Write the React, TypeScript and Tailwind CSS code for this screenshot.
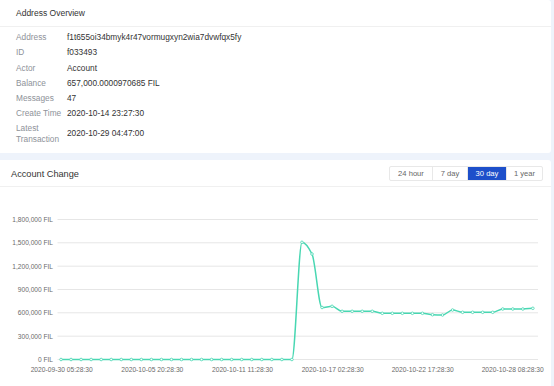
import React from "react";

const font = { fontFamily: '"Liberation Sans", Arial, sans-serif' };

const rows: [string, string][] = [
  ["Address", "f1t655oi34bmyk4r47vormugxyn2wia7dvwfqx5fy"],
  ["ID", "f033493"],
  ["Actor", "Account"],
  ["Balance", "657,000.0000970685 FIL"],
  ["Messages", "47"],
  ["Create Time", "2020-10-14 23:27:30"],
];

// y values (svg coords) of each data point, read off the reference
const zeroY = 172.5;
const ys: number[] = [
  ...Array(24).fill(zeroY),
  55.3, 67, 120.5, 119.3, 124.3, 124.3, 124.3, 124.3,
  126.3, 126.3, 126.3, 126.3, 126.3, 127.7, 128, 123,
  125.3, 125.3, 125.3, 125.3, 122, 122, 122, 121.3,
];

const pts = ys.map((y, i) => [61 + i * 10.04, y] as [number, number]);

// monotone cubic, no overshoot around the spike
function smoothPath(p: [number, number][]) {
  const n = p.length;
  const sl: number[] = [];
  for (let i = 0; i < n - 1; i++) sl.push((p[i + 1][1] - p[i][1]) / (p[i + 1][0] - p[i][0]));
  const m: number[] = [];
  for (let i = 0; i < n; i++) {
    if (i === 0) m.push(sl[0]);
    else if (i === n - 1) m.push(sl[n - 2]);
    else if (sl[i - 1] * sl[i] <= 0) m.push(0);
    else m.push((2 * sl[i - 1] * sl[i]) / (sl[i - 1] + sl[i]));
  }
  let d = `M${p[0][0]},${p[0][1]}`;
  for (let i = 0; i < n - 1; i++) {
    const h = (p[i + 1][0] - p[i][0]) / 3;
    d += ` C${(p[i][0] + h).toFixed(1)},${(p[i][1] + m[i] * h).toFixed(1)} ${(p[i + 1][0] - h).toFixed(1)},${(
      p[i + 1][1] - m[i + 1] * h
    ).toFixed(1)} ${p[i + 1][0].toFixed(1)},${p[i + 1][1].toFixed(1)}`;
  }
  return d;
}

const yTicks = [
  ["1,800,000 FIL", 32.5],
  ["1,500,000 FIL", 55.8],
  ["1,200,000 FIL", 79.2],
  ["900,000 FIL", 102.5],
  ["600,000 FIL", 125.8],
  ["300,000 FIL", 149.2],
  ["0 FIL", 172.5],
] as const;

const xTicks = [
  ["2020-09-30 05:28:30", 61.7],
  ["2020-10-05 20:28:30", 152.3],
  ["2020-10-11 11:28:30", 242.5],
  ["2020-10-17 02:28:30", 332.7],
  ["2020-10-22 17:28:30", 422.7],
  ["2020-10-28 08:28:30", 512.7],
] as const;

function Chart() {
  return (
    <svg width="551" height="198" className="block" style={font}>
      {yTicks.map(([label, y]) => (
        <g key={label}>
          <line x1="57.5" x2="538" y1={y} y2={y} stroke="#e6e6e6" strokeWidth="1" />
          <text x="53" y={y} dy="2.3" textAnchor="end" fontSize="6.6" fill="#6b6b6b">
            {label}
          </text>
        </g>
      ))}
      {xTicks.map(([label, x]) => (
        <text key={label} x={x} y="184.5" textAnchor="middle" fontSize="6.7" fill="#6b6b6b">
          {label}
        </text>
      ))}
      <path d={smoothPath(pts)} fill="none" stroke="#48d7b2" strokeWidth="1.5" />
      {pts.map(([x, y], i) => (
        <circle key={i} cx={x} cy={y} r="1.3" fill="#fff" stroke="#48d7b2" strokeWidth="0.8" />
      ))}
    </svg>
  );
}

export default function App() {
  const ranges = ["24 hour", "7 day", "30 day", "1 year"];
  const widths = ["w-[42px]", "w-[35px]", "w-[39px]", "w-[36px]"];
  return (
    <div className="w-[554px] h-[386px] overflow-hidden bg-[#eef3fb] pr-[3px]" style={font}>
      {/* Address overview */}
      <section className="bg-white rounded-r-[3px]">
        <div className="h-[27px] border-b border-[#f0f0f0] pl-[16px] pt-[1px] flex items-center text-[8.5px] text-[#333]">
          Address Overview
        </div>
        <div className="pt-[3px] pb-[6px] pl-[16px] text-[8.3px]">
          {rows.map(([k, v]) => (
            <div key={k} className="h-[15.1px] flex items-center">
              <span className="w-[51px] text-[#8e9299]">{k}</span>
              <span className="text-[#333]">{v}</span>
            </div>
          ))}
          <div className="h-[26.3px] flex items-center">
            <span className="w-[51px] text-[#8e9299] leading-[10.6px]">
              Latest
              <br />
              Transaction
            </span>
            <span className="text-[#333]">2020-10-29 04:47:00</span>
          </div>
        </div>
      </section>

      {/* Account change */}
      <section className="mt-[7px] bg-white rounded-r-[3px] h-[300px]">
        <div className="h-[27px] border-b border-[#f0f0f0] pl-[11px] pr-[8px] flex items-center justify-between">
          <span className="text-[9.2px] text-[#333] mt-[4px]">Account Change</span>
          <div className="flex h-[15px] border border-[#e8e8e8] rounded-[2px] mt-[1px] text-[7.6px]">
            {ranges.map((r, i) => (
              <div
                key={r}
                className={`${widths[i]} flex items-center justify-center ${
                  i > 0 ? "border-l border-[#e8e8e8]" : ""
                } ${r === "30 day" ? "bg-[#1d4fca] text-white" : "text-[#666]"}`}
              >
                {r}
              </div>
            ))}
          </div>
        </div>
        <Chart />
      </section>
    </div>
  );
}
